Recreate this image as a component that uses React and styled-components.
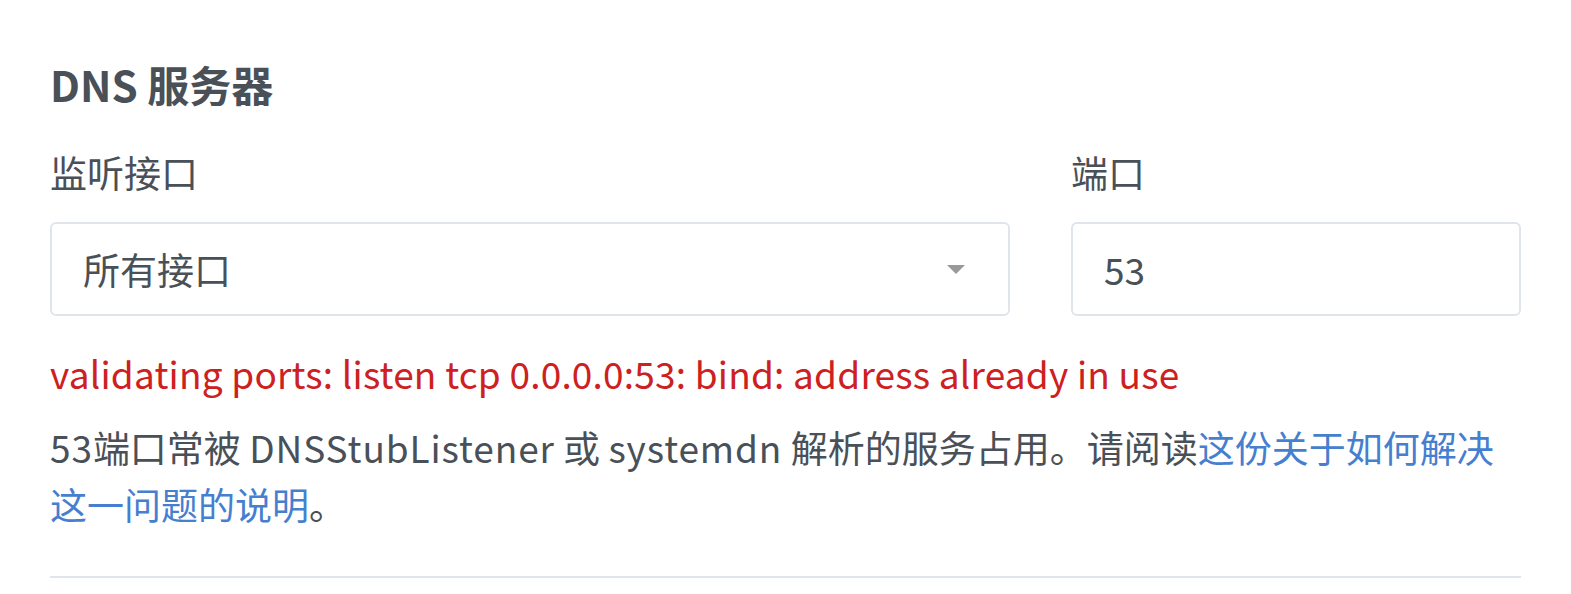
import styled, { createGlobalStyle } from 'styled-components';

const GlobalStyle = createGlobalStyle`
  body {
    margin: 0;
    background: #fff;
    font-family: 'Noto Sans CJK SC', 'Noto Sans', sans-serif;
    color: #495057;
  }
`;

const Section = styled.section`
  width: 1471px;
  padding: 59px 0 0 50px;
`;

const Title = styled.h2`
  margin: 0 0 41px 0;
  font-size: 42px;
  line-height: 50px;
  font-weight: 700;
  color: #495057;
`;

const FieldRow = styled.div`
  display: grid;
  grid-template-columns: 960px 1fr;
  column-gap: 61px;
`;

const Field = styled.div`
  display: flex;
  flex-direction: column;
`;

const Label = styled.label`
  font-size: 37px;
  line-height: 44px;
  margin-bottom: 28px;
`;

const Control = styled.div`
  position: relative;
  box-sizing: border-box;
  height: 94px;
  border: 2px solid #e0e5ec;
  border-radius: 6px;
  display: flex;
  align-items: center;
  padding: 0 31px;
  font-size: 37px;
  color: #495057;
`;

const Caret = styled.span`
  position: absolute;
  right: 43px;
  top: 41px;
  width: 0;
  height: 0;
  border-left: 9px solid transparent;
  border-right: 9px solid transparent;
  border-top: 9px solid #999;
`;

const ErrorText = styled.div`
  margin-top: 35px;
  font-size: 37px;
  line-height: 44px;
  letter-spacing: 0.2px;
  color: #cd201f;
`;

const Help = styled.p`
  margin: 24px 0 0 0;
  font-size: 37px;
  line-height: 57px;
`;

const Latin = styled.span`
  letter-spacing: 0.9px;
`;

const Link = styled.a`
  color: #467fcf;
  text-decoration: none;
`;

const Rule = styled.hr`
  margin: 43px 0 0 0;
  border: 0;
  border-top: 2px solid #e0e5ec;
`;

export default function App() {
  return (
    <>
      <GlobalStyle />
      <Section>
        <Title>DNS 服务器</Title>
        <FieldRow>
          <Field>
            <Label>监听接口</Label>
            <Control>
              所有接口
              <Caret />
            </Control>
          </Field>
          <Field>
            <Label>端口</Label>
            <Control>53</Control>
          </Field>
        </FieldRow>
        <ErrorText>validating ports: listen tcp 0.0.0.0:53: bind: address already in use</ErrorText>
        <Help>
          <Latin>53</Latin>端口常被 <Latin>DNSStubListener</Latin> 或 <Latin>systemdn</Latin> 解析的服务占用。请阅读
          <Link href="#">这份关于如何解决这一问题的说明</Link>。
        </Help>
        <Rule />
      </Section>
    </>
  );
}
